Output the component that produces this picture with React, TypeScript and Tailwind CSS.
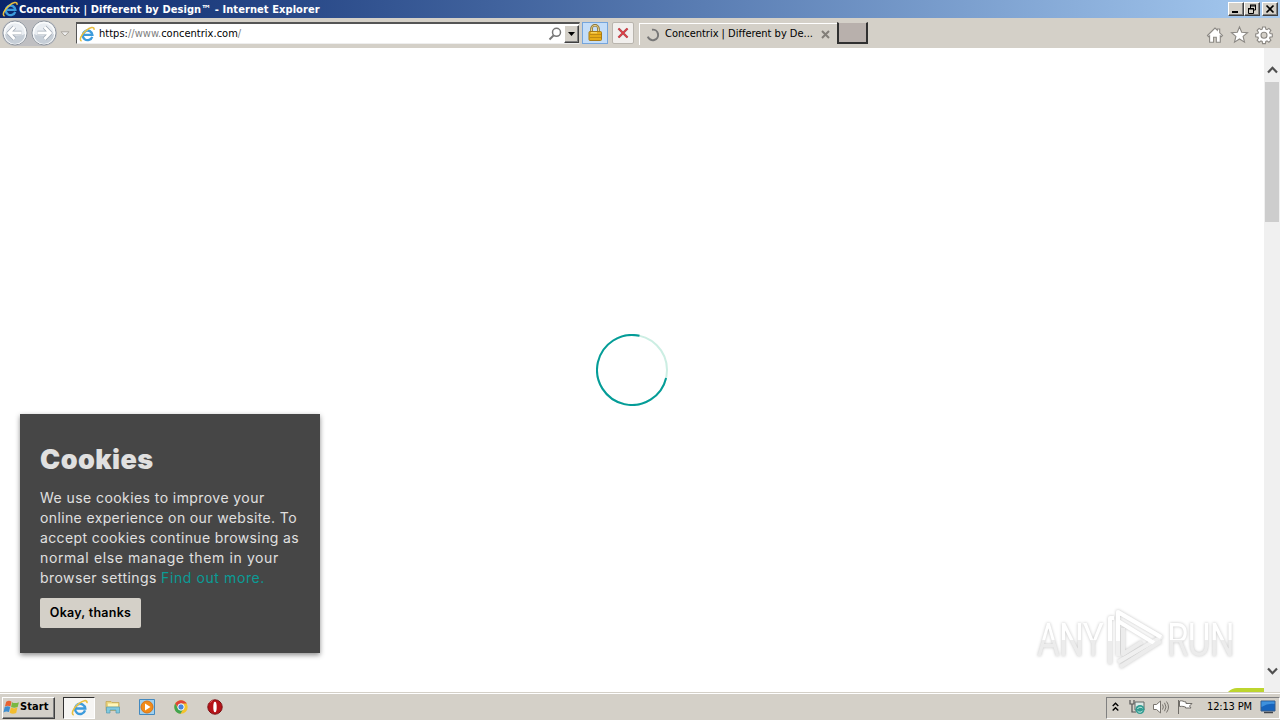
import { FC, ReactNode } from "react"

interface IconProps {
  className?: string
}

const IELogo: FC<IconProps> = ({ className }) => (
  <svg viewBox="0 0 16 16" className={className} fill="none">
    <path
      d="M13.2 10.8A4.8 4.8 0 1 1 13.4 8.9H5"
      stroke="#3c9bdc"
      strokeWidth="2.3"
    />
    <path d="M4.2 7.6A4.4 4.4 0 0 1 8.6 4.4" stroke="#a5def8" strokeWidth="1" />
    <path
      d="M2.6 15C-.2 14.4 2 8.6 6.8 4.8 11 1.2 15.6.2 15 3.8"
      stroke="#e9bf3e"
      strokeWidth="1.5"
    />
  </svg>
)

const NavButton: FC<{ forward?: boolean }> = ({ forward }) => (
  <svg
    viewBox="0 0 26 26"
    className={forward ? "size-[26px] -scale-x-100" : "size-[26px]"}
    fill="none"
  >
    <circle cx="13" cy="13" r="12" fill="#e9edf2" stroke="#8f969f" />
    <circle cx="13" cy="13" r="10.5" stroke="#fafbfc" strokeWidth="1.5" />
    <path d="M3 14a10 10 0 0 0 20 0c-5 3-14 2-20 0" fill="#c6ced7" />
    <path
      d="M12.5 7 6.7 13l5.8 6M7.5 13h12"
      stroke="#a3acb7"
      strokeWidth="4.5"
      strokeLinejoin="round"
    />
    <path d="M12.5 7 6.7 13l5.8 6M7.5 13h12" stroke="#fff" strokeWidth="2.8" />
  </svg>
)

const Lock: FC = () => (
  <svg viewBox="0 0 16 18" className="h-[18px] w-4" fill="none">
    <path d="M4.5 8V4.8a3.5 3.5 0 0 1 7 0V8" stroke="#8b7030" strokeWidth="2.6" />
    <path d="M4.5 8V4.8a3.5 3.5 0 0 1 7 0V8" stroke="#e8d38b" strokeWidth="1" />
    <rect x="2" y="7.5" width="12.5" height="9" rx="1" fill="#e7ab16" stroke="#a77a16" />
    <path d="M3 10.5h11M3 13.5h11" stroke="#c18a12" />
    <path d="M4 8.8h6" stroke="#ffe17a" />
  </svg>
)

const WindowButton: FC<{ children: ReactNode }> = ({ children }) => (
  <div className="flex h-[14px] w-4 items-center justify-center border border-t-white border-r-[#404040] border-b-[#404040] border-l-white bg-[#d4d0c8] shadow-[inset_-1px_-1px_#808080]">
    <svg viewBox="0 0 14 12" className="h-3 w-[14px]" fill="none" stroke="#000">
      {children}
    </svg>
  </div>
)

const TitleBar: FC = () => (
  <div className="flex h-[18px] items-center bg-linear-to-r from-[#0a246a] to-[#a6caf0] pr-[2px] pl-[2px]">
    <IELogo className="mr-[1px] size-4" />
    <span className="pt-px font-['DejaVu_Sans_Condensed','DejaVu_Sans',sans-serif] text-[11px] leading-[17px] font-bold tracking-[0.08px] whitespace-nowrap text-white">
      Concentrix | Different by Design™ - Internet Explorer
    </span>
    <div className="ml-auto flex">
      <WindowButton>
        <path d="M3 9h6" strokeWidth="2" />
      </WindowButton>
      <WindowButton>
        <path d="M5 2h6M5 3h6M5.5 2v3M10.5 2v5H9M3 5.5h5.5M3 6h6M3.5 5v5.5h5V5" />
      </WindowButton>
      <div className="ml-[2px]">
        <WindowButton>
          <path d="m3.5 2.5 7 7m0-7-7 7" strokeWidth="1.7" />
        </WindowButton>
      </div>
    </div>
  </div>
)

const NavBar: FC = () => (
  <div className="flex h-[30px] bg-[#d4d0c8] pl-[2px] font-['DejaVu_Sans_Condensed','DejaVu_Sans',sans-serif] text-[11px] text-black">
    <div className="mt-[2px] flex h-[26px] gap-[3px] rounded-full bg-[#bfbfc2]">
      <NavButton />
      <NavButton forward />
    </div>
    <svg viewBox="0 0 10 6" className="mt-[13px] ml-[3px] h-[6px] w-[10px]">
      <path d="M1 .8h8L5 5z" fill="#eee" stroke="#aaa69f" />
    </svg>
    <div className="mt-1 ml-[6px] flex h-[22px] w-[504px] items-center border border-t-2 border-t-[#555] border-r-[#d4d0c8] border-b-[#eee] border-l-[#555] bg-white pl-[2px]">
      <IELogo className="size-4" />
      <span className="ml-1 pt-px leading-[18px] tracking-[0.02px] whitespace-nowrap">
        https:<span className="text-[#808080]">//www.</span>concentrix.com
        <span className="text-[#808080]">/</span>
      </span>
      <svg viewBox="0 0 16 16" className="ml-auto size-4" fill="none" stroke="#777">
        <circle cx="9.5" cy="6.3" r="4" strokeWidth="1.5" />
        <path d="m6.5 9.5-4 4" strokeWidth="2" />
      </svg>
      <div className="ml-[1px] flex h-[18px] w-[15px] items-center justify-center border border-t-white border-r-[#404040] border-b-[#404040] border-l-white bg-[#d4d0c8] shadow-[inset_-1px_-1px_#808080]">
        <svg viewBox="0 0 7 4" className="h-1 w-[7px]">
          <path d="M0 0h7L3.5 4z" />
        </svg>
      </div>
    </div>
    <div className="mt-1 ml-[2px] flex h-[22px] w-[26px] items-center justify-center border border-[#75a5dc] bg-[#c4ddf8]">
      <Lock />
    </div>
    <div className="mt-1 ml-[4px] flex h-[22px] w-[22px] items-center justify-center rounded-[2px] border border-[#b9b5ae] bg-[#f1efed]">
      <svg viewBox="0 0 12 12" className="size-3" fill="none">
        <path d="m1.5 1.5 9 9m0-9-9 9" stroke="#a15b60" strokeWidth="2.4" />
        <path d="m1.5 1.5 9 9m0-9-9 9" stroke="#e33b43" strokeWidth="1.2" />
      </svg>
    </div>
    <div className="mt-[5px] ml-[5px] flex h-[22px] w-[198px] items-center border-t border-l border-white pl-[6px]">
      <svg viewBox="0 0 14 14" className="size-[14px]" fill="none">
        <path d="M6 1.7a5.3 5.3 0 1 1-4.2 7" stroke="#777" strokeWidth="2" />
      </svg>
      <span className="ml-[5px] w-[156px] tracking-[-0.01px] whitespace-nowrap">
        Concentrix | Different by De...
      </span>
      <svg viewBox="0 0 9 9" className="size-[9px] shrink-0" stroke="#827e78" strokeWidth="2">
        <path d="m1 1 7 7m0-7-7 7" />
      </svg>
    </div>
    <div className="mt-1 h-[22px] w-[31px] border-t border-r-2 border-b-2 border-l-2 border-t-[#d4d0c8] border-r-[#303030] border-b-[#303030] border-l-[#303030] bg-[#b8b0ac]" />
    <svg
      viewBox="0 0 68 20"
      className="mt-[7px] mr-[6px] ml-auto h-5 w-[68px]"
      fill="#fff"
      stroke="#8b8883"
      strokeWidth="1.1"
    >
      <path d="M1.5 10.5 9 3l2.3 2.2V4h2.4v3.8l2.8 2.7-1.2 1.2-1-.8v6.3h-4v-5H7.6v5h-4v-6.3l-1 .8z" />
      <path d="m33.5 2 2.2 5.3 5.8.4-4.4 3.7 1.4 5.7-5-3.1-5 3.1 1.4-5.7-4.4-3.7 5.8-.4z" />
      <path d="M56.6 2h2.8l.4 2.2 1.2.5 1.9-1.3 2 2-1.3 1.9.5 1.2 2.2.4v2.8l-2.2.4-.5 1.2 1.3 1.9-2 2-1.9-1.3-1.2.5-.4 2.2h-2.8l-.4-2.2-1.2-.5-1.9 1.3-2-2 1.3-1.9-.5-1.2-2.2-.4V8.9l2.2-.4.5-1.2-1.3-1.9 2-2L55 4.7l1.2-.5z" />
      <circle cx="58" cy="10.3" r="3" fill="#d4d0c8" />
    </svg>
  </div>
)

const CookieNotice: FC = () => (
  <div className="absolute top-[366px] left-5 h-[239px] w-[300px] bg-[#464646] px-5 pt-[31px] font-['Inter',sans-serif] text-[#e0e0e0] shadow-[0_2px_5px_rgba(0,0,0,0.45)]">
    <h2 className="text-[27px] leading-[30px] font-black tracking-[0.45px]">Cookies</h2>
    <div className="mt-[13px] text-[14px] leading-5 font-normal whitespace-nowrap">
      <div className="tracking-[0.43px]">We use cookies to improve your</div>
      <div className="tracking-[0.37px]">online experience on our website. To</div>
      <div className="tracking-[0.38px]">accept cookies continue browsing as</div>
      <div className="tracking-[0.61px]">normal else manage them in your</div>
      <div className="tracking-[0.42px]">
        browser settings{" "}
        <span className="tracking-[0.6px] text-[#0a9c96]">Find out more.</span>
      </div>
    </div>
    <button className="mt-[10px] h-[30px] w-[101px] rounded-[2px] bg-[#d4d0c8] pt-px text-[12.5px] font-semibold tracking-[0.25px] whitespace-nowrap text-black">
      Okay, thanks
    </button>
  </div>
)

const Watermark: FC = () => (
  <div className="absolute top-[559px] left-[1037px] flex h-[66px] w-[198px] items-center font-['Roboto',sans-serif] text-[46px] leading-none [filter:drop-shadow(0_0_1.5px_#c4c4c4)]">
    <div className="w-[68px] shrink-0">
      <span className="inline-block origin-left scale-x-[0.76] bg-linear-to-b from-white from-50% to-[#ececec] to-50% bg-clip-text pr-1 tracking-[-1px] text-transparent">
        ANY
      </span>
    </div>
    <svg
      viewBox="0 0 60 66"
      className="h-[66px] w-[60px] shrink-0"
      fill="none"
      stroke="#fff"
      strokeWidth="4"
      strokeLinejoin="round"
    >
      <path d="M13 49V5l43 25-43 25" stroke="#f0f0f0" />
      <path d="M13 34V5l43 25M13 14l36 22M5 34V11h4" />
      <path d="M5 34v23M18 21v26l19-12M15 60l41-26" stroke="#ececec" />
    </svg>
    <span className="ml-[2px] shrink-0 origin-left scale-x-[0.76] bg-linear-to-b from-white from-50% to-[#ececec] to-50% bg-clip-text pr-1 tracking-[-1px] text-transparent">
      RUN
    </span>
  </div>
)

const Page: FC = () => (
  <div className="relative flex h-[644px] overflow-hidden bg-white">
    <div className="flex w-[1264px] items-center justify-center">
      <svg viewBox="0 0 72 72" className="size-[72px]" fill="none" strokeWidth="2">
        <circle cx="36" cy="36" r="35" stroke="#cceee3" />
        <path d="M43.5 1.8A35 35 0 1 0 70.1 44" stroke="#049c98" />
      </svg>
    </div>
    <div className="w-4 bg-[#f0f0f0]">
      <div className="flex h-[34px] items-end justify-center pb-2">
        <svg viewBox="0 0 11 8" className="h-2 w-[11px]" fill="none" stroke="#505050" strokeWidth="2.2">
          <path d="m1 6.5 4.5-4.7L10 6.5" />
        </svg>
      </div>
      <div className="mx-px h-[140px] bg-[#cdcdcd]" />
      <div className="flex h-[453px] items-end justify-center">
        <svg viewBox="0 0 11 8" className="h-2 w-[11px]" fill="none" stroke="#505050" strokeWidth="2.2">
          <path d="m1 1.5 4.5 4.7L10 1.5" />
        </svg>
      </div>
    </div>
    <CookieNotice />
    <Watermark />
    <div className="absolute top-[640px] left-[1225px] h-3 w-[39px] rounded-tl-[12px] bg-[#bdd52f]" />
  </div>
)

const WindowsLogo: FC = () => (
  <svg viewBox="0 0 16 16" className="size-[17px] shrink-0">
    <path d="M3 2.5Q6 .8 8 2.7L7 7Q4.5 5.5 1.8 7z" fill="#e76332" />
    <path d="M8.5 3q2.5 1.7 6.5 0l-1.2 4.5Q10.5 9 7.6 7.5z" fill="#79b842" />
    <path d="M1.6 7.5Q4.4 6 6.8 7.5l-1.2 4.7Q3 11 .4 12.6z" fill="#3e8ed0" />
    <path d="M7.4 8.1q2.9 1.5 6.2 0l-1.2 5.1Q9 14.7 6.3 13z" fill="#f3bd2e" />
  </svg>
)

const Taskbar: FC = () => (
  <div className="relative flex h-7 items-center border-t border-[#d4d0c8] bg-[#d4d0c8] pl-[2px] font-['DejaVu_Sans_Condensed','DejaVu_Sans',sans-serif] text-black shadow-[inset_0_1px_#fff]">
    <button className="mt-[2px] flex h-[22px] w-[53px] items-center border border-t-white border-r-[#404040] border-b-[#404040] border-l-white bg-[#d4d0c8] text-[11px] font-bold tracking-[0.1px] whitespace-nowrap shadow-[inset_-1px_-1px_#808080]">
      <WindowsLogo />
      Start
    </button>
    <div className="mt-[2px] ml-2 flex h-[22px] w-8 items-center justify-center border border-t-[#303030] border-r-white border-b-white border-l-[#303030] bg-[#f6f5f3]">
      <IELogo className="size-[17px]" />
    </div>
    <svg viewBox="0 0 18 18" className="ml-[9px] size-[18px]">
      <path d="M2 3.5h5l1 1h7v8H2z" fill="#ead37c" stroke="#c2a34c" strokeWidth=".7" />
      <path d="M4 5.5h10v3H4z" fill="#fff6bb" />
      <path d="M2.5 9h13v6H12v-3H6v3H2.5z" fill="#80c9df" stroke="#5499b1" strokeWidth=".7" />
    </svg>
    <svg viewBox="0 0 18 18" className="ml-4 size-[18px]">
      <path d="M1.5 1.5h15v15h-15z" fill="#9fd0ef" stroke="#4389bf" />
      <circle cx="9" cy="9" r="6" fill="#f28b17" stroke="#d77316" />
      <path d="m7 5.5 5.5 3.5L7 12.5z" fill="#fff" />
    </svg>
    <svg viewBox="0 0 18 18" className="ml-4 size-[18px]">
      <circle cx="9" cy="9" r="6.7" fill="#f4c32c" />
      <path d="M3.2 5.6A6.7 6.7 0 0 1 14.8 5.6H9l-2.5 5z" fill="#df4438" />
      <path d="M3.2 5.6A6.7 6.7 0 0 0 8.5 15.7l3-5.1H6z" fill="#42a450" />
      <circle cx="9" cy="9" r="3.2" fill="#4785dc" stroke="#fff" />
    </svg>
    <svg viewBox="0 0 18 18" className="ml-4 size-[18px]">
      <circle cx="9" cy="9" r="7.2" fill="#b61217" stroke="#7c1014" />
      <ellipse cx="9" cy="9" rx="1.7" ry="5.3" fill="#fff" />
      <path d="M3.5 5a7 7 0 0 1 3-2.4" stroke="#ef7674" fill="none" />
    </svg>
    <div className="mt-[2px] ml-auto flex h-[22px] w-[174px] items-center border border-t-[#808080] border-r-white border-b-white border-l-[#808080] pb-[2px] pl-[5px]">
      <svg viewBox="0 0 7 10" className="h-[10px] w-[7px]" fill="none" stroke="#000" strokeWidth="1.4">
        <path d="m.7 4 2.8-2.7L6.3 4M.7 8.5l2.8-2.7 2.8 2.7" />
      </svg>
      <svg viewBox="0 0 18 18" className="ml-[9px] size-[18px]" fill="none">
        <path d="M2 2v4h4V2M4 6v8h4" stroke="#555" strokeWidth="1.2" />
        <path d="M7 4h9v8H7z" fill="#dce9e6" stroke="#626966" />
        <circle cx="12" cy="11.5" r="4.5" fill="#319b91" />
        <path d="M9.5 11a3 3 0 0 1 5-.8m0 2.5a3 3 0 0 1-5 .3" stroke="#c8eee5" />
      </svg>
      <svg viewBox="0 0 18 18" className="ml-[6px] size-[18px]" fill="#fff" stroke="#77736d">
        <path d="M1.5 6.5h3L8.5 3v12l-4-3.5h-3z" />
        <path d="M10.5 6.5q1.7 2.5 0 5M12.5 4.8q3 4.2 0 8.4M14.5 3.5q4 5.5 0 11" fill="none" />
      </svg>
      <svg viewBox="0 0 18 18" className="ml-[6px] size-[18px]" fill="#fff" stroke="#706d68">
        <path d="M2.5 2v14M3.5 3c3-.8 4 .8 6.5 1v1.5h6L13.5 8l1.5 2H9.5V9c-2-.4-3-1-6-.5z" />
      </svg>
      <span className="ml-[13px] w-[53px] pt-px text-[11px] tracking-[-0.15px] whitespace-nowrap">
        12:13 PM
      </span>
      <svg viewBox="0 0 16 14" className="h-[14px] w-4 shrink-0">
        <path d="M1 1h14v10H1z" fill="#1764bd" stroke="#385d89" />
        <path d="M1.5 7Q8 3 14.5 4V1.5h-13z" fill="#3f91dd" />
        <path d="M4 12.5h9" stroke="#40454c" strokeWidth="1.5" />
      </svg>
    </div>
  </div>
)

export default function App() {
  return (
    <div className="flex h-[720px] w-[1280px] flex-col overflow-hidden">
      <TitleBar />
      <NavBar />
      <Page />
      <Taskbar />
    </div>
  )
}
